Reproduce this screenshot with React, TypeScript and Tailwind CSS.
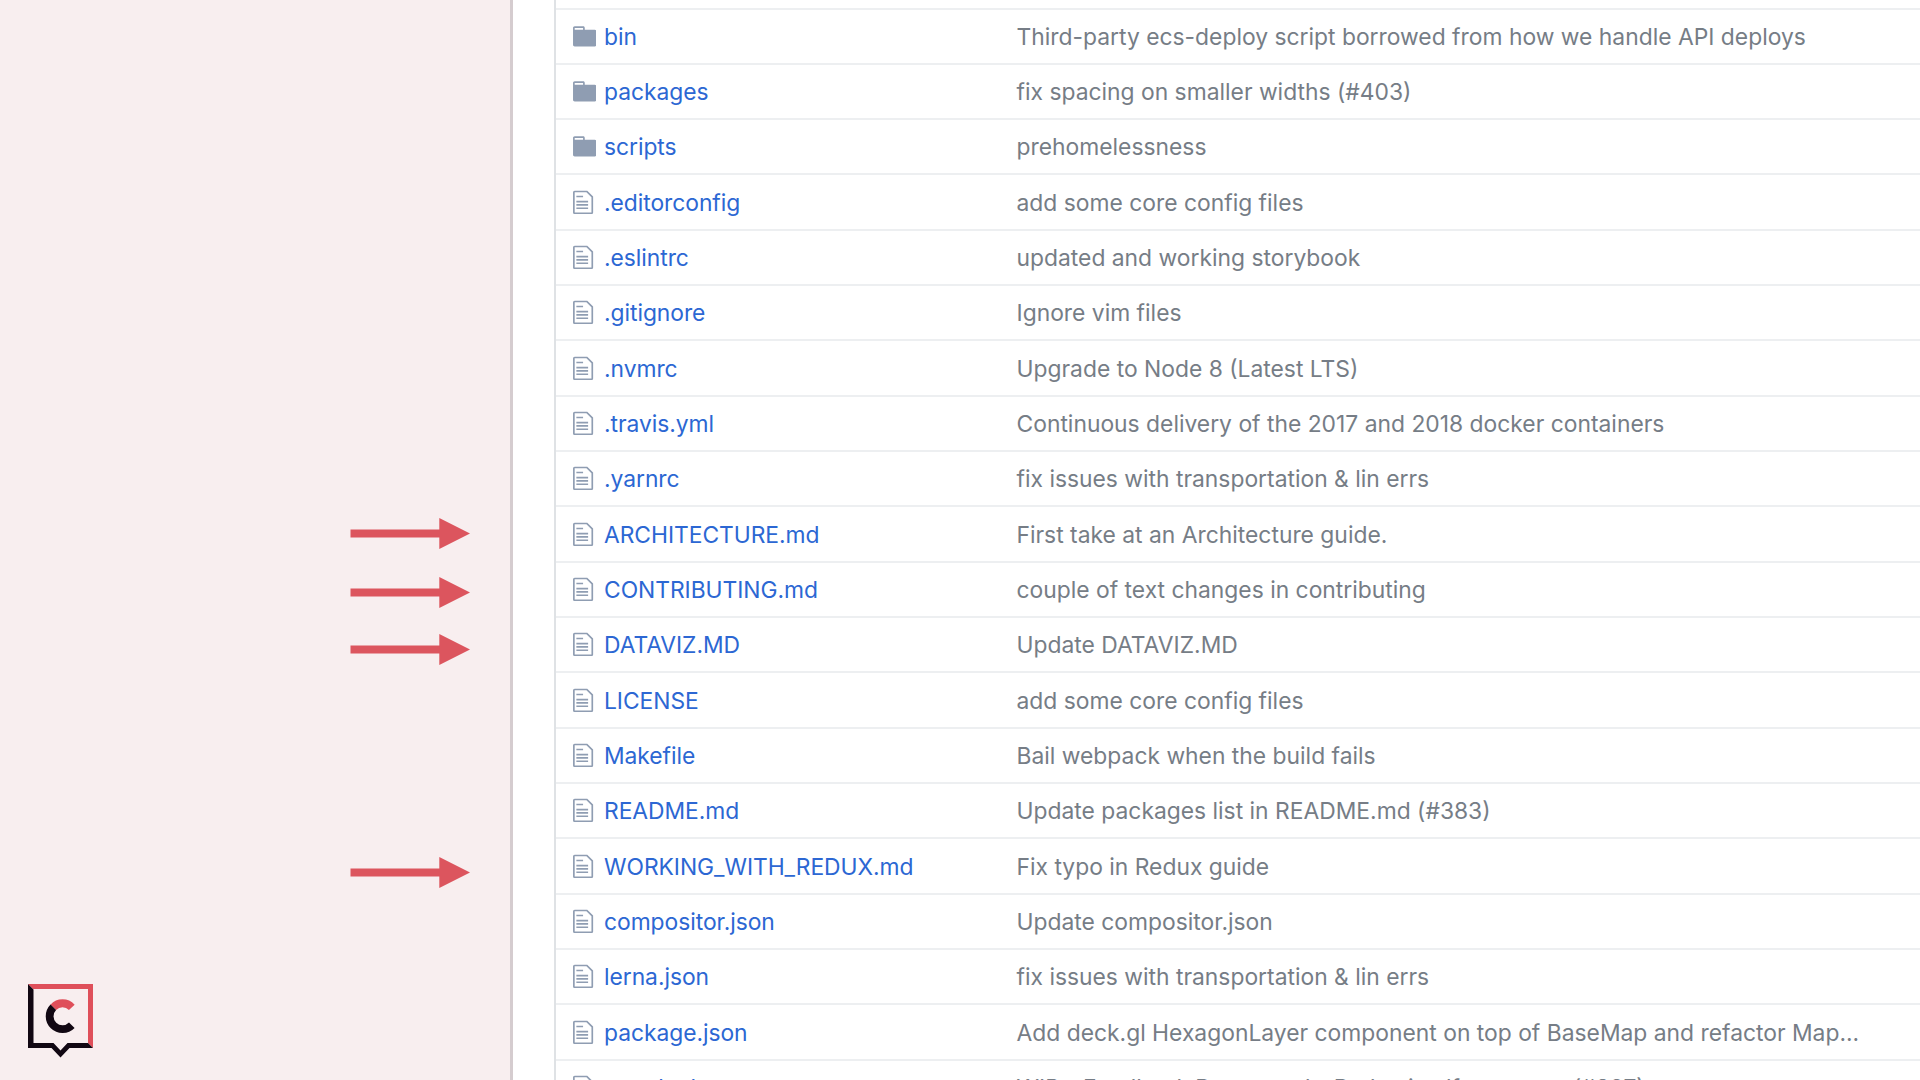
const FILE =
  "M6 5H2V4h4v1zM2 8h7V7H2v1zm0 2h7V9H2v1zm0 2h7v-1H2v1zm10-7.5V14c0 .55-.45 1-1 1H1c-.55 0-1-.45-1-1V2c0-.55.45-1 1-1h7.5L12 4.5zM11 5L8 2H1v12h10V5z";
const FOLDER =
  "M13 4H7V3c0-.66-.31-1-1-1H1c-.55 0-1 .45-1 1v10c0 .55.45 1 1 1h12c.55 0 1-.45 1-1V5c0-.55-.45-1-1-1zM6 4H1V3h5v1z";

type Entry = { name: string; message: string; folder?: boolean };

const entries: Entry[] = [
  { name: "bin", message: "Third-party ecs-deploy script borrowed from how we handle API deploys", folder: true },
  { name: "packages", message: "fix spacing on smaller widths (#403)", folder: true },
  { name: "scripts", message: "prehomelessness", folder: true },
  { name: ".editorconfig", message: "add some core config files" },
  { name: ".eslintrc", message: "updated and working storybook" },
  { name: ".gitignore", message: "Ignore vim files" },
  { name: ".nvmrc", message: "Upgrade to Node 8 (Latest LTS)" },
  { name: ".travis.yml", message: "Continuous delivery of the 2017 and 2018 docker containers" },
  { name: ".yarnrc", message: "fix issues with transportation & lin errs" },
  { name: "ARCHITECTURE.md", message: "First take at an Architecture guide." },
  { name: "CONTRIBUTING.md", message: "couple of text changes in contributing" },
  { name: "DATAVIZ.MD", message: "Update DATAVIZ.MD" },
  { name: "LICENSE", message: "add some core config files" },
  { name: "Makefile", message: "Bail webpack when the build fails" },
  { name: "README.md", message: "Update packages list in README.md (#383)" },
  { name: "WORKING_WITH_REDUX.md", message: "Fix typo in Redux guide" },
  { name: "compositor.json", message: "Update compositor.json" },
  { name: "lerna.json", message: "fix issues with transportation & lin errs" },
  { name: "package.json", message: "Add deck.gl HexagonLayer component on top of BaseMap and refactor Map..." },
  { name: "yarn.lock", message: "WIP - Feedback Requested - Redux itself are some (#397)" },
];

function Arrow() {
  return (
    <svg className="block h-[31px] w-[120px]" viewBox="0 0 120 31" fill="#dc555e">
      <path d="M0.500 11.500H89.300V0L120 15.500L89.300 31V19.500H0.500Z" />
    </svg>
  );
}

function Logo() {
  return (
    <svg className="block h-[74px] w-[65px]" viewBox="0 0 65 74">
      <path d="M0 0H65V64L60 59V5H5Z" fill="#df4f5a" />
      <path d="M0 0L5.5 5.5V59H25.500L32.500 66.500L39.500 59H60L65 64H41.500L32.500 73.500L23.500 64H0Z" fill="#110712" />
      <path d="M43.800 23.300A12.600 12.600 0 0 0 25.300 23.300" fill="none" stroke="#df4f5a" strokeWidth="7.800" />
      <path d="M25.300 23.300A12.600 12.600 0 1 0 43.800 41.300" fill="none" stroke="#110712" strokeWidth="7.800" />
    </svg>
  );
}

export default function App() {
  return (
    <div className="flex h-[1080px] w-[1920px] overflow-hidden bg-white font-['Inter',sans-serif]">
      <aside className="flex w-[513px] shrink-0 flex-col border-r-[3px] border-[#d5cccf] bg-[#f8eeef]">
        <div className="flex flex-col pt-[518px] pl-[350px]">
          <Arrow />
          <div className="pt-[28px]"><Arrow /></div>
          <div className="pt-[26px]"><Arrow /></div>
          <div className="pt-[192px]"><Arrow /></div>
        </div>
        <div className="pt-[96px] pl-[28px]">
          <Logo />
        </div>
      </aside>
      <main className="ml-[41px] flex-1 border-l-2 border-[#dfe2e5] pt-[7.500px]">
        {entries.map((e) => (
          <div
            key={e.name}
            className="flex h-[55.330px] items-center border-t-2 border-[#edeff1] text-[22.850px] leading-none whitespace-nowrap"
          >
            <div className="flex w-[460.500px] shrink-0 items-center pl-[16.500px]">
              <div className="w-[31.500px] shrink-0">
                <svg
                  className="block h-[26.800px] w-[23.500px]"
                  viewBox="0 0 14 16"
                  fill="#8f9db2"
                >
                  <path fillRule="evenodd" d={e.folder ? FOLDER : FILE} />
                </svg>
              </div>
              <a className="pt-[2px] tracking-[-0.050px] text-[#2c67d3]">{e.name}</a>
            </div>
            <span className="pt-[2px] text-[#767d86]">{e.message}</span>
          </div>
        ))}
      </main>
    </div>
  );
}
